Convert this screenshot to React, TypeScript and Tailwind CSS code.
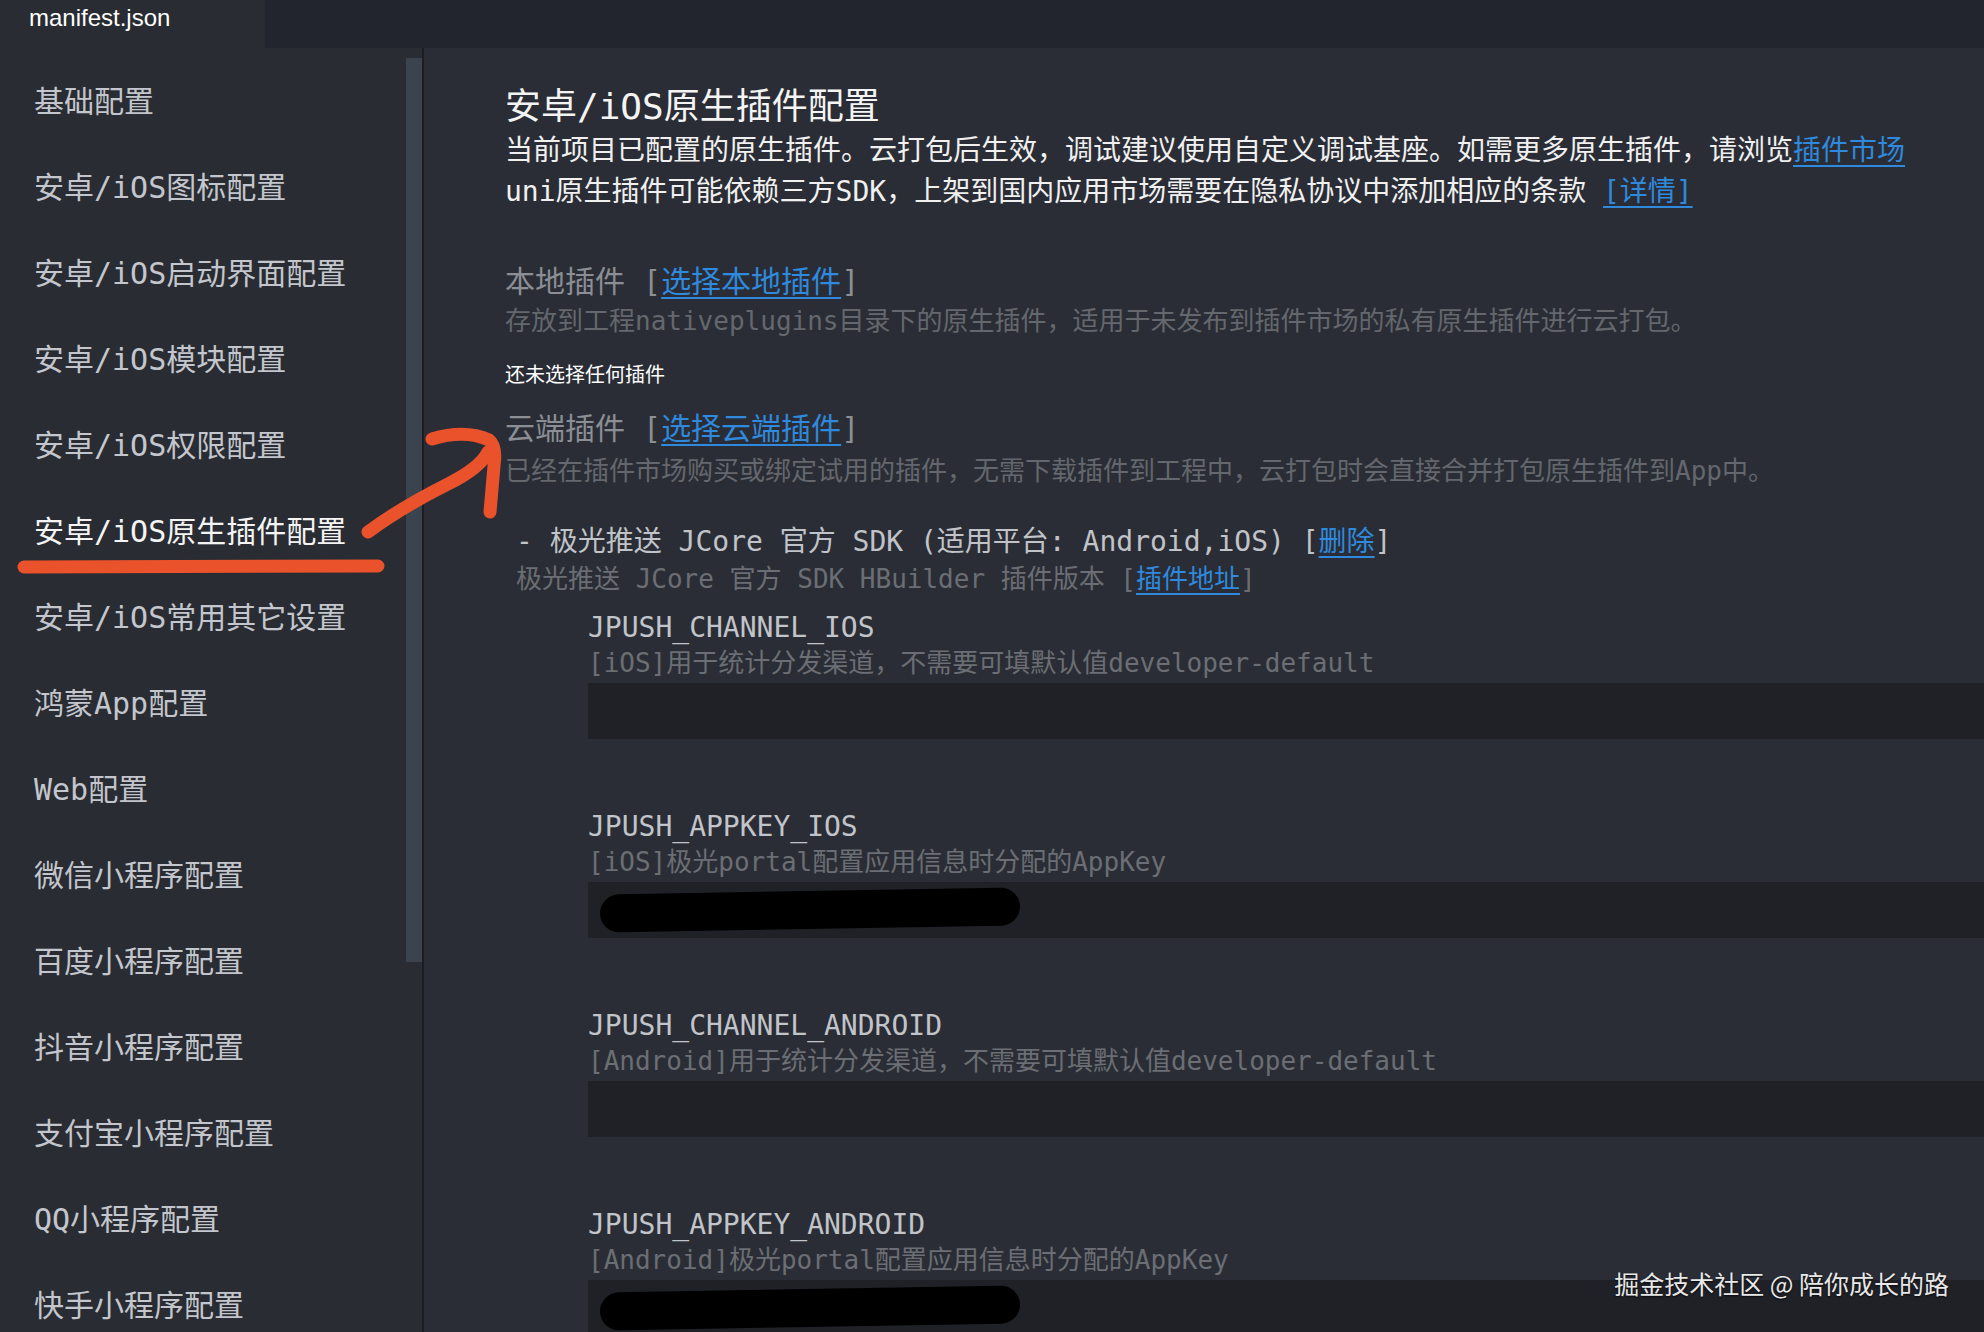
import React from "react";

const menu = [
  "基础配置",
  "安卓/iOS图标配置",
  "安卓/iOS启动界面配置",
  "安卓/iOS模块配置",
  "安卓/iOS权限配置",
  "安卓/iOS原生插件配置",
  "安卓/iOS常用其它设置",
  "鸿蒙App配置",
  "Web配置",
  "微信小程序配置",
  "百度小程序配置",
  "抖音小程序配置",
  "支付宝小程序配置",
  "QQ小程序配置",
  "快手小程序配置",
];

const params = [
  { name: "JPUSH_CHANNEL_IOS", desc: "[iOS]用于统计分发渠道，不需要可填默认值developer-default", hidden: false },
  { name: "JPUSH_APPKEY_IOS", desc: "[iOS]极光portal配置应用信息时分配的AppKey", hidden: true },
  { name: "JPUSH_CHANNEL_ANDROID", desc: "[Android]用于统计分发渠道，不需要可填默认值developer-default", hidden: false },
  { name: "JPUSH_APPKEY_ANDROID", desc: "[Android]极光portal配置应用信息时分配的AppKey", hidden: true },
];

const Link = ({ children }: { children: React.ReactNode }) => (
  <span className="text-[#2f89dc] underline decoration-2 underline-offset-[5px]">{children}</span>
);

const Sidebar = () => (
  <div className="flex h-full shrink-0 bg-[#292c33]">
    <div className="w-[406px] pt-[10px]">
      {menu.map((item) => (
        <div
          key={item}
          className={
            "flex h-[86px] items-center pl-[34px] text-[30px] " +
            (item === "安卓/iOS原生插件配置" ? "text-[#f4f4f4]" : "text-[#c3c6cc]")
          }
        >
          {item}
        </div>
      ))}
    </div>
    <div className="w-[16px] pt-[10px]">
      <div className="h-[904px] bg-[#3b434e]" />
    </div>
    <div className="w-[2px] bg-[#1b1d23]" />
  </div>
);

const ParamBlock = ({ name, desc, hidden }: { name: string; desc: string; hidden: boolean }) => (
  <div className="mb-[70px] pl-[83px]">
    <div className="text-[28px] leading-[36px] text-[#c1c4c9]">{name}</div>
    <div className="text-[26px] leading-[34px] text-[#6b6e74]">{desc}</div>
    <div className="mt-[3px] flex h-[56px] items-center bg-[#1f2127] pl-[12px]">
      {hidden && <div className="h-[38px] w-[420px] -rotate-1 rounded-full bg-black" />}
    </div>
  </div>
);

export default function App() {
  return (
    <div className="relative flex h-[1332px] w-[1984px] flex-col overflow-hidden bg-[#2a2d35] font-['DejaVu_Sans_Mono','Noto_Sans_CJK_SC',monospace]">
      <div className="flex h-[48px] shrink-0 bg-[#22242e]">
        <div className="w-[265px] bg-[#292c33] pl-[29px] pt-[2px] font-['Liberation_Sans','Noto_Sans_CJK_SC',sans-serif] text-[24px] leading-[32px] text-white">
          manifest.json
        </div>
      </div>

      <div className="flex min-h-0 flex-1">
        <Sidebar />

        <div className="min-w-0 flex-1 pl-[81px] pt-[37px]">
          <div className="text-[36px] leading-[44px] text-[#f4f4f4]">安卓/iOS原生插件配置</div>
          <div className="mt-[1px] text-[28px] leading-[41px] text-[#f0f0f0]">
            <div className="whitespace-nowrap">
              当前项目已配置的原生插件。云打包后生效，调试建议使用自定义调试基座。如需更多原生插件，请浏览<Link>插件市场</Link>
            </div>
            <div className="whitespace-nowrap">
              uni原生插件可能依赖三方SDK，上架到国内应用市场需要在隐私协议中添加相应的条款 <Link>[详情]</Link>
            </div>
          </div>

          <div className="mt-[50px] text-[30px] leading-[40px] text-[#8b8e94]">
            本地插件 [<Link>选择本地插件</Link>]
          </div>
          <div className="mt-[1px] whitespace-nowrap text-[26px] leading-[36px] text-[#64676d]">
            存放到工程nativeplugins目录下的原生插件，适用于未发布到插件市场的私有原生插件进行云打包。
          </div>
          <div className="mt-[20px] font-['Noto_Sans_CJK_SC',sans-serif] text-[20px] leading-[30px] text-white">
            还未选择任何插件
          </div>

          <div className="mt-[20px] text-[30px] leading-[40px] text-[#8b8e94]">
            云端插件 [<Link>选择云端插件</Link>]
          </div>
          <div className="mt-[4px] whitespace-nowrap text-[26px] leading-[36px] text-[#64676d]">
            已经在插件市场购买或绑定试用的插件，无需下载插件到工程中，云打包时会直接合并打包原生插件到App中。
          </div>

          <div className="mt-[34px] pl-[11px]">
            <div className="whitespace-nowrap text-[28px] leading-[38px] text-[#c0c3c8]">
              - 极光推送 JCore 官方 SDK (适用平台: Android,iOS) [<Link>删除</Link>]
            </div>
            <div className="whitespace-nowrap text-[26px] leading-[36px] text-[#6b6e74]">
              极光推送 JCore 官方 SDK HBuilder 插件版本 [<Link>插件地址</Link>]
            </div>
          </div>

          <div className="mt-[13px]">
            {params.map((p) => (
              <ParamBlock key={p.name} {...p} />
            ))}
          </div>
        </div>
      </div>

      {/* hand-drawn annotations */}
      <svg className="pointer-events-none absolute inset-0" width="1984" height="1332">
        <g fill="none" stroke="#e9522a" strokeLinecap="round" strokeLinejoin="round" strokeWidth="13">
          <line x1="24" y1="567" x2="378" y2="566" />
          <path d="M368 532 C395 512 420 498 448 484 C468 474 482 464 488 452" />
          <path d="M432 439 Q465 429 489 440 Q497 446 494 466 L490 512" />
        </g>
      </svg>

      <div className="absolute bottom-[34px] right-[35px] font-['Noto_Sans_CJK_SC',sans-serif] text-[25px] leading-[30px] text-[#e8e8e8] [text-shadow:0_1px_2px_rgba(0,0,0,0.8)]">
        掘金技术社区 @ 陪你成长的路
      </div>
    </div>
  );
}
